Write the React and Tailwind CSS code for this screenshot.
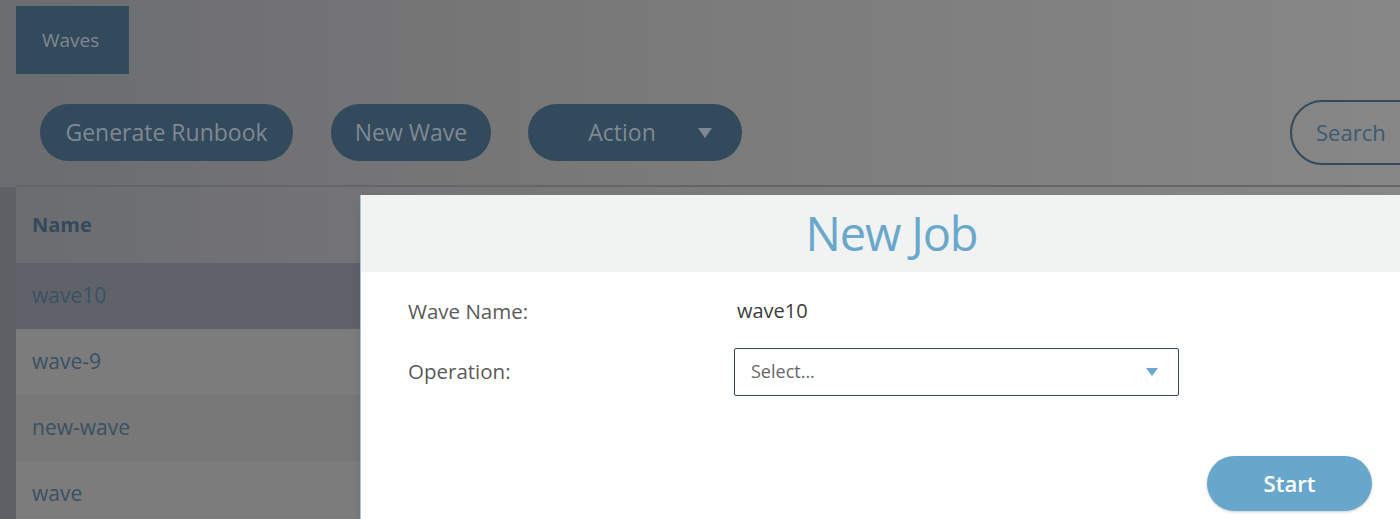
import { useState } from "react";

const FONT = { fontFamily: '"Open Sans", "Liberation Sans", sans-serif' };

const waves = ["wave10", "wave-9", "new-wave", "wave"];

function PillButton({ children, className = "" }) {
  return (
    <button
      className={`h-[57px] rounded-full bg-[#33495c] text-[#7e8993] text-[23px] font-medium flex items-center justify-center ${className}`}
    >
      {children}
    </button>
  );
}

function NewJobModal() {
  const [operation] = useState("");

  return (
    <div className="absolute left-[360px] top-[195px] w-[1062px] h-[340px] bg-white border-l border-[#a9c4d6] shadow-lg">
      <div className="h-[77px] bg-[#f1f3f2] flex items-center justify-center">
        <h2 className="text-[47px] font-medium text-[#69a8cc] tracking-tight">New Job</h2>
      </div>
      <div className="pl-[47px] pt-[24px]">
        <div className="grid grid-cols-[326px_445px] items-center gap-y-[21px]">
          <span className="text-[20.5px] text-[#5a5a5a]">Wave Name:</span>
          <span className="text-[20px] text-[#3c3c3c] pl-[3px]">wave10</span>
          <span className="text-[20.5px] text-[#5a5a5a]">Operation:</span>
          <div className="h-[48px] border-[1.5px] border-[#33495c] rounded-[2px] flex items-center justify-between pl-4 pr-5">
            <span className="text-[18px] text-[#666]">
              {operation || "Select..."}
            </span>
            <svg width="12" height="8" viewBox="0 0 12 8">
              <path d="M0 0h12L6 8z" fill="#67a7cc" />
            </svg>
          </div>
        </div>
        <div className="flex justify-end w-[964px] mt-[60px]">
          <button className="w-[165px] h-[55px] rounded-full bg-[#67a7cc] text-white text-[22px] font-semibold shadow-[0_1px_3px_rgba(0,0,0,0.2)]">
            Start
          </button>
        </div>
      </div>
    </div>
  );
}

export default function App() {
  return (
    <div
      style={FONT}
      className="relative w-[1400px] h-[519px] overflow-hidden bg-gradient-to-r from-[#6b6c6f] via-[#7b7b7b] to-[#878787]"
    >
      {/* top tab */}
      <div className="pt-[6px] pl-4">
        <div className="w-[113px] h-[68px] bg-[#33495c] flex items-center pl-[26px] text-[19px] text-[#7e8993]">
          Waves
        </div>
      </div>

      {/* toolbar */}
      <div className="flex items-center pl-10 mt-[26px] h-[65px]">
        <PillButton className="w-[253px]">Generate Runbook</PillButton>
        <PillButton className="w-[160px] ml-[38px]">New Wave</PillButton>
        <PillButton className="w-[214px] ml-[37px] gap-[42px] pl-[30px]">
          Action
          <svg width="14" height="10" viewBox="0 0 14 10">
            <path d="M0 0h14L7 10z" fill="#7e8993" />
          </svg>
        </PillButton>
        <div className="ml-auto -mr-[40px] w-[150px] h-[65px] rounded-full border-2 border-[#33495c] flex items-center pl-[24px] text-[22px] text-[#3d5a70]">
          Search
        </div>
      </div>

      <div className="mt-[20px] ml-4 h-[2px] bg-[#646568]" />

      {/* table */}
      <div className="flex">
        <div className="w-4 h-[332px] bg-[#5f6166]" />
        <div className="w-[344px]">
          <div className="h-[76px] flex items-center pl-4 text-[20px] font-bold text-[#33495c]">
            Name
          </div>
          {waves.map((w, i) => (
            <div
              key={w}
              className={`h-[66px] flex items-center pl-4 text-[21px] text-[#3a5063] ${
                i === 0 ? "bg-[#5f6369]" : i % 2 ? "bg-[#7c7c7c]" : "bg-[#787878]"
              }`}
            >
              {w}
            </div>
          ))}
        </div>
      </div>

      <NewJobModal />
    </div>
  );
}
